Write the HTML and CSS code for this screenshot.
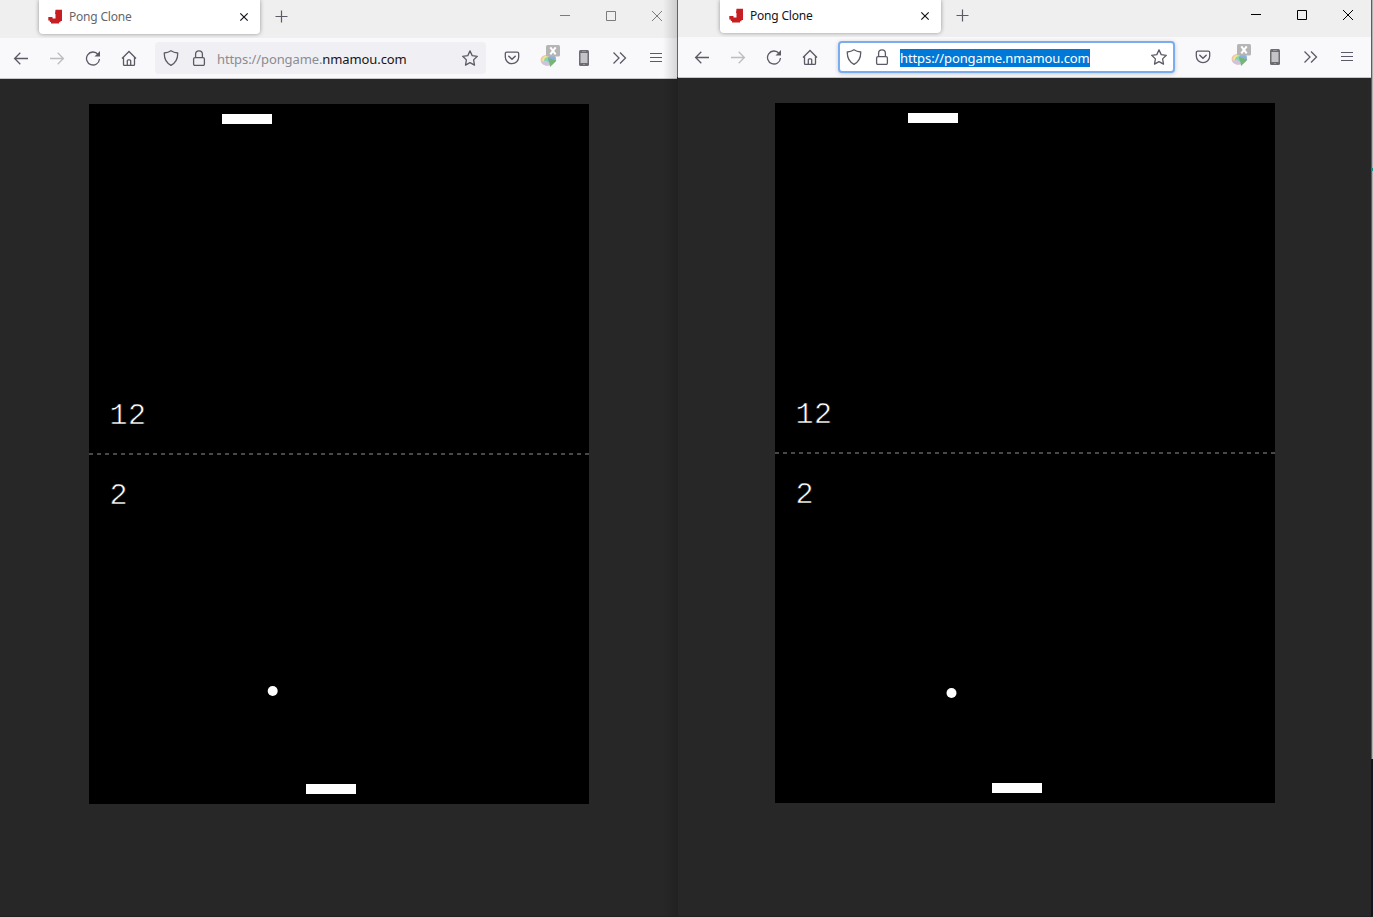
FILE: index.html
```
<!DOCTYPE html>
<html lang="en">
<head>
<meta charset="utf-8">
<title>Pong Clone</title>
<link rel="stylesheet" href="styles.css">
</head>
<body>
<svg class="symbols" aria-hidden="true">
  <symbol id="logo" viewBox="0 0 16 16"><path d="M8.500 .8H15V12h-1.500v1.300h-1.500v1.200H4v-1.500H2.800v-1.500H1.300V8H5.500v1.500h3V5H8z" fill="#c61e21" stroke="none"/></symbol>
  <symbol id="close" viewBox="0 0 16 16"><path d="M4.300 4.300l7.400 7.400M11.700 4.300l-7.400 7.400" stroke-width="1.200"/></symbol>
  <symbol id="plus" viewBox="0 0 16 16"><path d="M8.500 2.500v12M2.500 8.500h12" stroke-width="1.200"/></symbol>
  <symbol id="min" viewBox="0 0 16 16"><path d="M3 7.500h10"/></symbol>
  <symbol id="max" viewBox="0 0 16 16"><path d="M3.500 3.500h9v9h-9z"/></symbol>
  <symbol id="x" viewBox="0 0 16 16"><path d="M3 3l10 10M13 3L3 13"/></symbol>
  <symbol id="back" viewBox="0 0 16 16"><path d="M15 8.500H1.800M7.300 2.800L1.600 8.500l5.700 5.700"/></symbol>
  <symbol id="fwd" viewBox="0 0 16 16"><path d="M1 8.500h13.200M8.700 2.800l5.700 5.700-5.700 5.700"/></symbol>
  <symbol id="reload" viewBox="0 0 16 16"><path d="M13 4.300A6.500 6.500 0 1 0 14.500 9"/><path d="M15 1v5.500H9.500z" fill="currentColor" stroke="none"/></symbol>
  <symbol id="home" viewBox="0 0 16 16"><path d="M1 8.500L8 1.500l7 7M2.500 7.200v7c0 .8.500 1.300 1.300 1.300h8.400c.8 0 1.300-.5 1.300-1.300v-7M6.300 15.300V10.800c0-.6.400-1 1-1h1.400c.6 0 1 .4 1 1v4.500"/></symbol>
  <symbol id="shield" viewBox="0 0 16 16"><path d="M8 .8c2 1.400 4.300 2 6.700 2.200.2 5.200-1 9.500-6.700 12.300C2.300 12.500 1.100 8.200 1.300 3 3.700 2.800 6 2.200 8 .8z"/></symbol>
  <symbol id="lock" viewBox="0 0 16 16"><rect x="2.600" y="7.600" width="10.800" height="7.900" rx="1.500"/><path d="M4.600 7.500V4.200a3.400 3.400 0 0 1 6.800 0v3.300"/></symbol>
  <symbol id="star" viewBox="0 0 16 16"><path d="M8 .9l2.200 4.700 5.100.7-3.700 3.600.9 5.200L8 12.600l-4.500 2.500.9-5.200L.7 6.300l5.100-.7z" stroke-linejoin="round"/></symbol>
  <symbol id="pocket" viewBox="0 0 16 16"><path d="M2.800 2.100h10.400c.9 0 1.500.6 1.500 1.500V7a6.700 6.700 0 0 1-13.400 0V3.600c0-.9.600-1.500 1.500-1.500z"/><path d="M4.800 6.300L8 9.300l3.200-3" stroke-width="1.500" stroke-linecap="round"/></symbol>
  <symbol id="globe" viewBox="0 0 22 22">
    <g stroke="none" opacity=".8">
      <ellipse cx="8" cy="15" rx="7.500" ry="5.500" fill="#eab9a0"/>
      <ellipse cx="8.500" cy="15" rx="6.300" ry="4.500" fill="#efe36e"/>
      <ellipse cx="9" cy="15.500" rx="5" ry="3.500" fill="#65cf9b"/>
      <circle cx="12" cy="14" r="4" fill="#729ed8"/>
      <path d="M1 17c2 4 7 4.500 10 2.500L6 15.500z" fill="#c8b4d8"/>
      <path d="M8 13l8.500 2.500-6.500 6.500-.5-4z" fill="#55a657"/>
    </g>
    <rect x="6" y="0" width="14" height="11.500" rx="1.500" fill="#b5b5b5" stroke="none"/>
    <path d="M10.300 2.300l5.400 7M15.700 2.300l-5.400 7" stroke="#fff" stroke-width="2"/>
  </symbol>
  <symbol id="phone" viewBox="0 0 16 16"><rect x="3" y="0" width="10" height="16" rx="1.500" fill="#6c6c72" stroke="none"/><path d="M4.500 3h7v10h-7z" fill="#c4c4c6" stroke="none"/><path d="M6 1.500h4M7 14.500h2" stroke="#a8a8ac" stroke-width=".7"/></symbol>
  <symbol id="more" viewBox="0 0 16 16"><path d="M1.500 2.500L7 8l-5.500 5.500M8 2.500L13.500 8 8 13.500" stroke-width="1.300"/></symbol>
  <symbol id="menu" viewBox="0 0 16 16"><path d="M2 3.500h12M2 7.500h12M2 11.500h12" stroke-width="1.150"/></symbol>
</svg>

<main class="desktop">
  <section class="window inactive">
    <header class="tabbar">
      <div class="tab"><svg class="icon"><use href="#logo"/></svg><span class="title">Pong Clone</span><svg class="icon dark"><use href="#close"/></svg></div>
      <svg class="icon newtab"><use href="#plus"/></svg>
      <div class="controls"><svg class="icon"><use href="#min"/></svg><svg class="icon"><use href="#max"/></svg><svg class="icon"><use href="#x"/></svg></div>
    </header>
    <nav class="toolbar">
      <span class="btn"><svg class="icon"><use href="#back"/></svg></span>
      <span class="btn disabled"><svg class="icon"><use href="#fwd"/></svg></span>
      <span class="btn"><svg class="icon"><use href="#reload"/></svg></span>
      <span class="btn"><svg class="icon"><use href="#home"/></svg></span>
      <div class="urlbar"><svg class="icon"><use href="#shield"/></svg><svg class="icon"><use href="#lock"/></svg><span class="url">https://pongame.<b>nmamou.com</b></span><svg class="icon star"><use href="#star"/></svg></div>
      <span class="btn"><svg class="icon"><use href="#pocket"/></svg></span>
      <span class="btn"><svg class="icon globe"><use href="#globe"/></svg></span>
      <span class="btn"><svg class="icon"><use href="#phone"/></svg></span>
      <span class="btn"><svg class="icon"><use href="#more"/></svg></span>
      <span class="btn"><svg class="icon"><use href="#menu"/></svg></span>
    </nav>
    <div class="page">
      <svg class="game" viewBox="0 0 500 700">
        <rect width="500" height="700" fill="#000"/>
        <rect x="133" y="10" width="50" height="10" fill="#fff"/>
        <rect x="217" y="680" width="50" height="10" fill="#fff"/>
        <path class="net" d="M0 350h500"/>
        <circle cx="183.700" cy="587" r="5" fill="#fff"/>
        <text x="20.500" y="320">12</text>
        <text x="20.500" y="400">2</text>
      </svg>
    </div>
  </section>

  <section class="window active">
    <header class="tabbar">
      <div class="tab"><svg class="icon"><use href="#logo"/></svg><span class="title">Pong Clone</span><svg class="icon dark"><use href="#close"/></svg></div>
      <svg class="icon newtab"><use href="#plus"/></svg>
      <div class="controls"><svg class="icon"><use href="#min"/></svg><svg class="icon"><use href="#max"/></svg><svg class="icon"><use href="#x"/></svg></div>
    </header>
    <nav class="toolbar">
      <span class="btn"><svg class="icon"><use href="#back"/></svg></span>
      <span class="btn disabled"><svg class="icon"><use href="#fwd"/></svg></span>
      <span class="btn"><svg class="icon"><use href="#reload"/></svg></span>
      <span class="btn"><svg class="icon"><use href="#home"/></svg></span>
      <div class="urlbar"><svg class="icon"><use href="#shield"/></svg><svg class="icon"><use href="#lock"/></svg><span class="url">https://pongame.<b>nmamou.com</b></span><svg class="icon star"><use href="#star"/></svg></div>
      <span class="btn"><svg class="icon"><use href="#pocket"/></svg></span>
      <span class="btn"><svg class="icon globe"><use href="#globe"/></svg></span>
      <span class="btn"><svg class="icon"><use href="#phone"/></svg></span>
      <span class="btn"><svg class="icon"><use href="#more"/></svg></span>
      <span class="btn"><svg class="icon"><use href="#menu"/></svg></span>
    </nav>
    <div class="page">
      <svg class="game" viewBox="0 0 500 700">
        <rect width="500" height="700" fill="#000"/>
        <rect x="133" y="10" width="50" height="10" fill="#fff"/>
        <rect x="217" y="680" width="50" height="10" fill="#fff"/>
        <path class="net" d="M0 350h500"/>
        <circle cx="176.500" cy="590" r="5" fill="#fff"/>
        <text x="20.500" y="320">12</text>
        <text x="20.500" y="400">2</text>
      </svg>
    </div>
  </section>
  <div class="edge"><i class="edge-light"></i><i class="edge-mark"></i><i class="edge-light tall"></i></div>
</main>
</body>
</html>
```

FILE: styles.css
```
* { box-sizing: border-box; }
body { margin: 0; background: #272727; font-family: "Noto Sans", "Open Sans", sans-serif; overflow: hidden; }
.symbols { display: block; width: 0; height: 0; position: absolute; }
.desktop { display: flex; width: 1373px; height: 917px; border-bottom: 1px solid #221e22; }
.window { display: flex; flex-direction: column; flex: none; position: relative; }
.inactive { width: 677px; }
.active { width: 694px; border-left: 1px solid #626263; border-image: linear-gradient(#626263 77px, #202020 77px) 0 0 0 1; }
.inactive::after { content: ""; position: absolute; top: 0; right: 0; bottom: 0; width: 14px; background: linear-gradient(90deg, rgba(0,0,0,0), rgba(0,0,0,.14)); }

.icon { width: 16px; height: 16px; flex: none; fill: none; stroke: currentColor; stroke-width: 1.3; color: #5b5b66; }
.tabbar { display: flex; flex: none; height: 38px; background: #efefef; padding-left: 39px; }
.active .tabbar { height: 37px; padding-left: 42px; }
.tab { display: flex; align-items: center; width: 221px; height: 34px; padding: 0 8px 1px; background: #fff; border-radius: 0 0 4px 4px; box-shadow: 0 0 4px rgba(0,0,0,.38); color: #66666c; }
.active .tab { height: 33px; color: #15141a; }
.title { flex: 1; margin-left: 6px; font-size: 12px; line-height: 18px; letter-spacing: -.2px; }
.dark { color: #15141a; }
.newtab { margin: 8px 0 0 13px; }
.active .newtab { margin-top: 7px; }
.controls { display: flex; gap: 30px; margin: 8px 12px 0 auto; }
.active .controls { margin: 7px 15px 0 auto; }
.controls .icon { color: #7b7b7b; stroke-width: 1; }
.active .controls .icon { color: #000; }

.toolbar { display: flex; align-items: center; flex: none; height: 41px; padding: 0 3px; background: #f9f9fb; border-bottom: 1px solid #c7c7ca; }
.active .toolbar { padding: 0 6px; }
.btn { display: flex; width: 36px; height: 32px; align-items: center; justify-content: center; flex: none; }
.disabled .icon { color: #bdbdc1; }
.globe { width: 22px; height: 22px; margin: -5px 0 0 5px; }
.urlbar { display: flex; align-items: center; flex: 1; height: 32px; margin: 0 8px; padding: 0 8px; gap: 12px; background: #f0f0f4; border-radius: 4px; }
.active .urlbar { margin: 0 10px; padding: 0 6px; background: #fff; border: 2px solid #7aacf0; box-shadow: 0 1px 4px rgba(0,0,0,.2); }
.url { margin-left: -2px; margin-top: 2px; font-size: 13px; line-height: 18px; letter-spacing: -.1px; color: #8b8b92; white-space: nowrap; }
.active .url { background: #0078d7; color: #fff; }
.url b { font-weight: 400; color: #15141a; }
.active .url b { color: #fff; }
.star { margin-left: auto; }

.page { flex: 1; background: #272727; padding: 25px 0 0 89px; }
.active .page { padding-left: 97px; }
.game { display: block; width: 500px; height: 700px; }
.game text { font: 30px "Liberation Mono", monospace; letter-spacing: .6px; fill: #fff; stroke: #000; stroke-width: .6px; }
.net { stroke: #484848; stroke-width: 2; stroke-dasharray: 4 4; }

.edge { display: flex; flex-direction: column; flex: none; width: 2px; background: #14141c; }
.edge-light { height: 168px; background: #b0b0b0; border-left: 1px solid #5e5e60; }
.edge-mark { height: 3px; background: #118d8d; }
.tall { height: 588px; }
```
